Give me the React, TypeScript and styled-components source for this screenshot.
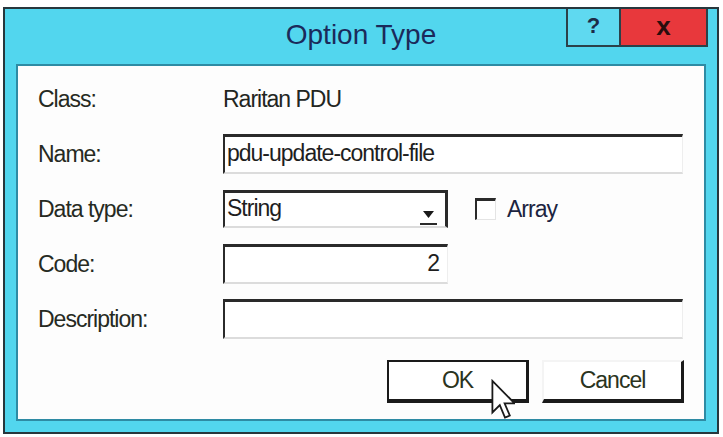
import styled, { createGlobalStyle } from 'styled-components';

const GlobalStyle = createGlobalStyle`
  html, body {
    margin: 0;
    padding: 0;
    background: #ffffff;
  }

  body {
    font-family: 'Liberation Sans', Arial, sans-serif;
  }
`;

export default function App() {
  return (
    <>
      <GlobalStyle />
      <Window>
        <TitleBar>
          <span />
          <Title>Option Type</Title>
          <CaptionButtons>
            <CaptionButton $variant="help">?</CaptionButton>
            <CaptionButton $variant="close">x</CaptionButton>
          </CaptionButtons>
        </TitleBar>

        <Frame>
          <Panel>
            <Form>
              <Row>
                <Label>Class:</Label>
                <StaticValue>Raritan PDU</StaticValue>
              </Row>

              <Row>
                <Label>Name:</Label>
                <TextBox $width={460}>pdu-update-control-file</TextBox>
              </Row>

              <Row>
                <Label>Data type:</Label>
                <Inline>
                  <ComboBox>
                    <ComboText>String</ComboText>
                    <DropButton>
                      <svg width="13" height="9" viewBox="0 0 13 9">
                        <path d="M1 1 L12 1 L6.5 8 Z" fill="#1a1a1a" />
                      </svg>
                    </DropButton>
                  </ComboBox>
                  <CheckLabel>
                    <CheckBox />
                    <span>Array</span>
                  </CheckLabel>
                </Inline>
              </Row>

              <Row>
                <Label>Code:</Label>
                <TextBox $width={225} $align="right">
                  2
                </TextBox>
              </Row>

              <Row>
                <Label>Description:</Label>
                <TextBox $width={460} />
              </Row>
            </Form>

            <ButtonRow>
              <DialogButton $default>
                OK
                <Cursor viewBox="0 0 12 20" width="24" height="41">
                  <path
                    d="M0.7 0.7 L0.7 16.5 L4.4 12.8 L7 19 L9.4 18 L6.8 11.9 L11.8 11.9 Z"
                    fill="#ffffff"
                    stroke="#1a1a1a"
                    strokeWidth="0.9"
                    strokeLinejoin="miter"
                  />
                </Cursor>
              </DialogButton>
              <DialogButton>Cancel</DialogButton>
            </ButtonRow>
          </Panel>
        </Frame>
      </Window>
    </>
  );
}

const Window = styled.div`
  box-sizing: border-box;
  display: flex;
  flex-direction: column;
  height: 427px;
  margin: 7px 4px 3px 3px;

  background-color: #52d6ee;
  border: 2px solid #27373d;
`;

const TitleBar = styled.div`
  display: grid;
  grid-template-columns: 1fr auto 1fr;
  height: 55px;
`;

const Title = styled.div`
  align-self: center;
  margin-top: -4px;

  font-size: 28px;
  color: #1b2a5a;
`;

const CaptionButtons = styled.div`
  justify-self: end;
  align-self: start;
  display: flex;
  margin-right: 9px;

  border: 2px solid #2b4149;
  border-top: none;
`;

const CaptionButton = styled.div<{ $variant: 'help' | 'close' }>`
  box-sizing: border-box;
  display: flex;
  align-items: center;
  justify-content: center;
  width: ${({ $variant }) => ($variant === 'help' ? '51px' : '87px')};
  height: 36px;
  padding-bottom: 3px;

  background-color: ${({ $variant }) => ($variant === 'help' ? '#5fd9f0' : '#e8383c')};
  border-left: ${({ $variant }) => ($variant === 'close' ? '2px solid #2b4149' : 'none')};

  font-size: ${({ $variant }) => ($variant === 'help' ? '22px' : '26px')};
  font-weight: 700;
  color: ${({ $variant }) => ($variant === 'help' ? '#1d2b48' : '#2a0d0d')};
  line-height: 1;
`;

const Frame = styled.div`
  flex: 1;
  display: flex;
  padding: 0 11px 11px 11px;
`;

const Panel = styled.div`
  flex: 1;
  display: flex;
  flex-direction: column;
  padding: 13px 20px 0 20px;

  background-color: #fdfdfd;
  border: 2px solid #2e8ba4;
`;

const Form = styled.div`
  display: flex;
  flex-direction: column;
  gap: 15px;
`;

const Row = styled.div`
  display: grid;
  grid-template-columns: 185px 1fr;
  align-items: center;
  height: 40px;
`;

const Label = styled.span`
  font-size: 23px;
  letter-spacing: -1px;
  color: #262a22;
`;

const StaticValue = styled.span`
  font-size: 23px;
  letter-spacing: -1px;
  color: #23261f;
`;

const TextBox = styled.div<{ $width: number; $align?: 'left' | 'right' }>`
  box-sizing: border-box;
  display: flex;
  align-items: center;
  justify-content: ${({ $align }) => ($align === 'right' ? 'flex-end' : 'flex-start')};
  width: ${({ $width }) => $width}px;
  height: 40px;
  padding: 0 8px 2px 2px;

  background-color: #ffffff;
  border-top: 3px solid #2a2a2a;
  border-left: 2px solid #2a2a2a;
  border-right: 1px solid #eeeeee;
  border-bottom: 2px solid #dcdcdc;

  font-size: 23px;
  letter-spacing: -1px;
  color: #1e1e1e;
`;

const Inline = styled.div`
  display: flex;
  align-items: center;
  gap: 27px;
`;

const ComboBox = styled.div`
  box-sizing: border-box;
  display: flex;
  align-items: center;
  width: 225px;
  height: 38px;

  background-color: #ffffff;
  border-top: 3px solid #2a2a2a;
  border-left: 2px solid #2a2a2a;
  border-right: 3px solid #2a2a2a;
  border-bottom: 2px solid #dcdcdc;
`;

const ComboText = styled.span`
  flex: 1;
  padding: 0 0 2px 2px;

  font-size: 23px;
  letter-spacing: -1px;
  color: #1e1e1e;
`;

const DropButton = styled.div`
  display: flex;
  align-items: flex-end;
  justify-content: center;
  width: 17px;
  height: 19px;
  margin: 10px 8px 0 0;

  border-bottom: 2px solid #2a2a2a;

  svg {
    margin-bottom: 4px;
  }
`;

const CheckLabel = styled.label`
  display: flex;
  align-items: center;
  gap: 11px;

  font-size: 23px;
  letter-spacing: -1px;
  color: #1c2440;
`;

const CheckBox = styled.span`
  box-sizing: border-box;
  width: 21px;
  height: 22px;

  background-color: #ffffff;
  border-top: 3px solid #2a2a2a;
  border-left: 2px solid #2a2a2a;
  border-right: 1px solid #e4e4e4;
  border-bottom: 1px solid #e4e4e4;
`;

const ButtonRow = styled.div`
  display: flex;
  justify-content: flex-end;
  gap: 13px;
  margin-top: 21px;
`;

const DialogButton = styled.div<{ $default?: boolean }>`
  position: relative;
  box-sizing: border-box;
  display: flex;
  align-items: center;
  justify-content: center;
  width: 142px;
  height: 43px;

  background-color: #ffffff;
  border-top: 2px solid ${({ $default }) => ($default ? '#1a1a1a' : '#f4f4f4')};
  border-left: 2px solid ${({ $default }) => ($default ? '#1a1a1a' : '#f4f4f4')};
  border-right: 3px solid #1a1a1a;
  border-bottom: 4px solid #1a1a1a;

  font-size: 23px;
  letter-spacing: -1px;
  color: #2a3320;
`;

const Cursor = styled.svg`
  position: absolute;
  left: 102px;
  top: 17px;
`;
